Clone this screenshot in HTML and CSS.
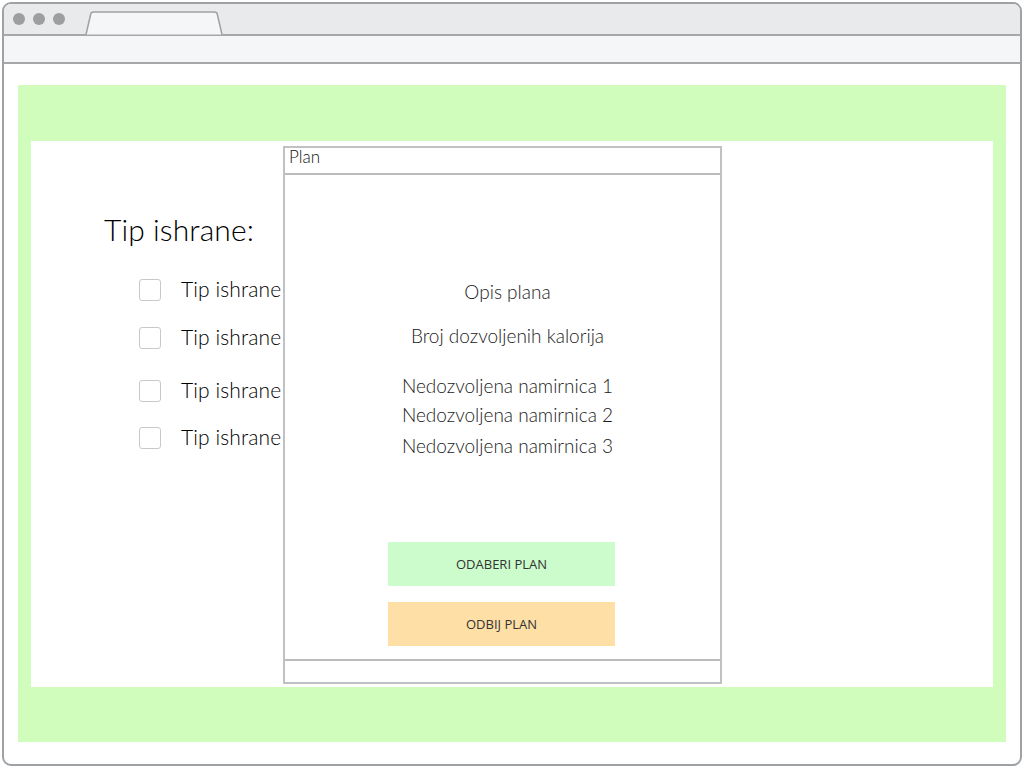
FILE: index.html
```html
<!DOCTYPE html>
<html>
<head>
<meta charset="utf-8">
<link rel="stylesheet" href="styles.css">
</head>
<body>
<div class="browser">
  <div class="tabbar">
    <div class="dots"><span class="dot"></span><span class="dot"></span><span class="dot"></span></div>
    <svg class="tab" width="138" height="24" viewBox="0 0 138 24">
      <path d="M1 23.5 L6 2 Q7 1 9 1 L129 1 Q131 1 132 2 L137 23.5" fill="#f5f6f7" stroke="#9ea2a5" stroke-width="1.5"/>
    </svg>
  </div>
  <div class="addressbar"></div>
  <div class="content">
    <div class="green">
      <div class="panel">
        <h1 class="heading">Tip ishrane:</h1>
        <ul class="options">
          <li class="option"><span class="box"></span><span class="label">Tip ishrane</span></li>
          <li class="option"><span class="box"></span><span class="label">Tip ishrane</span></li>
          <li class="option"><span class="box"></span><span class="label">Tip ishrane</span></li>
          <li class="option"><span class="box"></span><span class="label">Tip ishrane</span></li>
        </ul>
        <div class="modal">
          <div class="modal-head">Plan</div>
          <div class="modal-body">
            <p class="line opis">Opis plana</p>
            <p class="line broj">Broj dozvoljenih kalorija</p>
            <div class="forbidden">
              <p class="line">Nedozvoljena namirnica 1</p>
              <p class="line">Nedozvoljena namirnica 2</p>
              <p class="line">Nedozvoljena namirnica 3</p>
            </div>
            <div class="buttons">
              <div class="btn btn-green">ODABERI PLAN</div>
              <div class="btn btn-orange">ODBIJ PLAN</div>
            </div>
          </div>
          <div class="modal-foot"></div>
        </div>
      </div>
    </div>
  </div>
</div>
</body>
</html>
```
FILE: styles.css
```css
* { box-sizing: border-box; }
html, body { margin: 0; padding: 0; background: #ffffff; }
body { width: 1024px; height: 768px; overflow: hidden; font-family: Lato, "Liberation Sans", sans-serif; font-weight: 300; }

.browser {
  margin: 2px;
  width: 1020px;
  height: 764px;
  border: 2px solid #9ea2a5;
  border-radius: 9px;
  overflow: hidden;
  display: flex;
  flex-direction: column;
  background: #fff;
}
.tabbar {
  height: 32px;
  background: #e9eaeb;
  border-bottom: 2px solid #a4a8ab;
  display: flex;
  align-items: flex-end;
  flex-shrink: 0;
}
.dots {
  display: flex;
  gap: 8px;
  padding: 0 0 1px 9px;
  align-self: center;
}
.dot { width: 12px; height: 12px; border-radius: 50%; background: #9c9ea0; display: block; }
.tab { display: block; margin-left: 20px; margin-bottom: -1px; }
.addressbar {
  height: 28px;
  background: #f5f6f7;
  border-bottom: 2px solid #a4a8ab;
  flex-shrink: 0;
}
.content {
  flex: 1;
  padding: 21px 14px 21px 14px;
}
.green {
  height: 657px;
  background: #d0fdbc;
  padding: 56px 13px 55px 13px;
}
.panel {
  position: relative;
  background: #fff;
  height: 100%;
  padding: 68px 0 0 73px;
}
.heading {
  margin: 0;
  font-weight: 300;
  font-size: 30px;
  line-height: 40px;
  color: #000;
  letter-spacing: 0.1px;
}
.options {
  list-style: none;
  margin: 0;
  padding: 30px 0 0 35px;
}
.option {
  display: flex;
  align-items: center;
  height: 21px;
  margin-bottom: 27px;
  font-size: 21px;
  color: #000;
}
.option:nth-child(2) { margin-bottom: 32px; }
.option:nth-child(3) { margin-bottom: 26px; }
.box {
  width: 22px;
  height: 22px;
  border: 1px solid #c8c8c8;
  border-radius: 3px;
  background: #fff;
  margin-right: 20px;
}
.label { letter-spacing: 0.1px; margin-top: -2px; }

.modal {
  position: absolute;
  left: 252px;
  top: 5px;
  width: 439px;
  height: 538px;
  background: #fff;
  border: 2px solid #bfc1c3;
  display: flex;
  flex-direction: column;
}
.modal-head {
  height: 27px;
  border-bottom: 2px solid #b9bbbd;
  font-size: 17px;
  color: #111;
  padding: 0 0 0 4px;
  line-height: 18px;
}
.modal-body {
  flex: 1;
  display: flex;
  flex-direction: column;
  align-items: center;
  padding: 106px 0 0 10px;
  color: #1a1a1a;
}
.line { margin: 0; font-size: 19px; line-height: 22px; letter-spacing: 0px; }
.broj { margin-top: 22px; }
.forbidden { margin-top: 28px; display: flex; flex-direction: column; gap: 7px; }
.forbidden .line:nth-child(3) { margin-top: 2px; }
.buttons {
  margin-top: 85px;
  display: flex;
  flex-direction: column;
  gap: 16px;
  margin-left: -12px;
}
.btn {
  width: 227px;
  height: 44px;
  display: flex;
  align-items: center;
  justify-content: center;
  font-family: "Open Sans", sans-serif;
  font-weight: 400;
  font-size: 13px;
  color: #333;
}
.btn-green { background: #ccfccb; }
.btn-orange { background: #fedfa6; }
.modal-foot {
  height: 23px;
  border-top: 2px solid #b9bbbd;
}
```
